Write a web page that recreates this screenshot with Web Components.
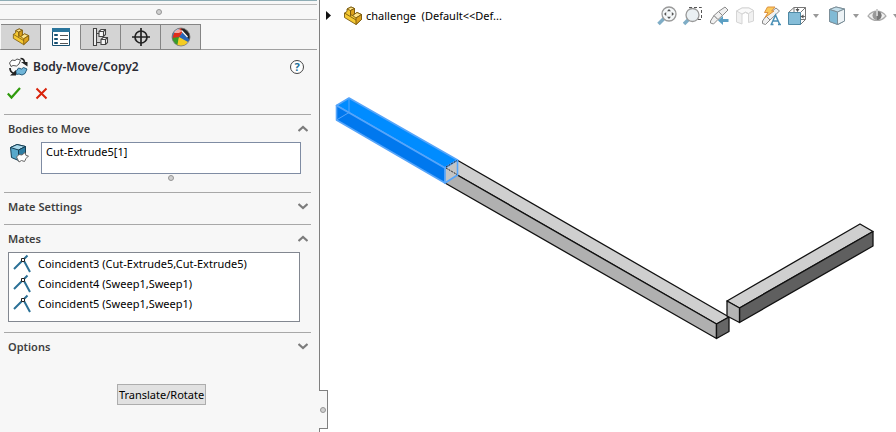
<!DOCTYPE html>
<html lang="en">
<head>
<meta charset="utf-8">
<title>challenge</title>
<style>
  html, body { height: 100%; }
  body { margin: 0; overflow: hidden; background: #fff; color: #000;
         font: 11px/16px "Noto Sans", "Open Sans", sans-serif; }
</style>
</head>
<body>
<cad-app>
  <property-panel slot="panel" name="Body-Move/Copy2">
    <panel-section name="Bodies to Move" open>
      <body-picker value="Cut-Extrude5[1]"></body-picker>
    </panel-section>
    <panel-section name="Mate Settings"></panel-section>
    <panel-section name="Mates" open>
      <mate-list>
        <mate-item>Coincident3 (Cut-Extrude5,Cut-Extrude5)</mate-item>
        <mate-item>Coincident4 (Sweep1,Sweep1)</mate-item>
        <mate-item>Coincident5 (Sweep1,Sweep1)</mate-item>
      </mate-list>
    </panel-section>
    <panel-section name="Options"></panel-section>
    <push-button slot="footer">Translate/Rotate</push-button>
  </property-panel>
  <view-bar slot="bar">challenge&nbsp; (Default&lt;&lt;Def...</view-bar>
  <model-view slot="model"></model-view>
</cad-app>

<script>
const base = `* { box-sizing: border-box; }
  button { margin: 0; padding: 0; border: 0; background: none; color: inherit; font: inherit; }
  svg { display: block; }`;

const icons = {
  part: `<g stroke="#7a5a10" stroke-width=".9" stroke-linejoin="round">
    <path fill="#f5c933" d="M1.500 7 4 5.500V3L8 1l3.500 1.500V8L14 6.500 18.500 8.500V13.500L13 18.500 1.500 11.500Z"/>
    <path fill="#ffe58c" d="M4 3 8 1l3.500 1.500L7.500 4.500Z"/>
    <path fill="#ffe58c" d="M9.500 9.500 14 6.500l4.500 2L13 12Z"/>
    <path fill="#dca11b" d="M13 12l5.500-3.500v5L13 18.500ZM7.500 4.500l4-2V8l-2 1.500-2-1Z"/>
    <path fill="none" d="M1.500 7 13 14M7.500 4.500V10"/></g>`,
  props: `<path fill="#fff" stroke="#174f70" d="M1.500 1.500h17v17h-17z"/>
    <path fill="#2a759c" d="M1 1h18v4H1z"/>
    <path fill="#5ba3c6" stroke="#174f70" d="M3.500 7.500h3v1h-3zM3.500 11.500h3v1h-3zM3.500 15.500h3v1h-3z"/>
    <path stroke="#555" d="M9 8.500h8M9 12.500h8M9 16.500h8"/>`,
  config: `<g fill="#f7f7f7" stroke="#444" stroke-width="1.1">
    <path d="M2.500 1.500h3v17h-3zM5.500 6.500h3M5.500 15.500h4"/>
    <path d="M8 4.500 10 2.500h4.500v5l-2 2H8zM10 12.500l2-2h4.500v5l-2 2H10z"/>
    <path fill="none" d="M8 4.500h4.500v5M12.500 4.500l2-2M10 12.500h4.500v5M14.500 12.500l2-2"/></g>`,
  target: `<g fill="none" stroke="#222" stroke-width="1.700"><circle cx="10" cy="10" r="6"/>
    <path d="M10 1v18M1 10h18"/></g>`,
  ball: `<clipPath id="c"><circle cx="10" cy="10" r="9"/></clipPath>
    <g clip-path="url(#c)"><path fill="#e02d1b" d="M0 0h14L8 11 0 12z"/><path fill="#2c8fd3" d="M0 0h6l3 2L4 11H0z"/>
    <path fill="#e02d1b" d="M6 3 12 1 9 11 1 12 3 6z"/>
    <path fill="#3a9b28" d="M0 11 8 10 7 20H0z"/><path fill="#f4cc22" d="M8 10 19 11 14 20H6z"/>
    <path fill="#2866b8" d="M8 10 12 5 20 12 17 15z"/><path fill="#252525" d="M10 0h10v14L11 5z"/>
    <ellipse cx="6" cy="4" rx="4" ry="2" fill="#fff" opacity=".6"/></g>
    <path fill="none" stroke="#fff" stroke-width="1.200" d="M10.500 3.500 16.500 10"/>
    <circle cx="10" cy="10" r="9" fill="none" stroke="#777" stroke-width=".8"/>`,
  move: `<g stroke="#444" stroke-width=".9" stroke-linejoin="round"><path fill="#fff" d="M1.500 6 4 3l3 .5 2-1.500 3.500 1L11 7 8.500 9 5 8.500 3 9.500z"/>
    <path fill="#70b5d8" stroke="#174f70" d="M8 14.500 10.500 11l3 1 2-1.500 3.500 1.500-2 4.500-3 1.500-3-1-2.500.5z"/></g>
    <path fill="none" stroke="#222" stroke-width="1.700" d="M12.500 1.500c3 0 4 1.500 4 4.500M2 11c0 3 1.500 4.500 3.500 5"/>
    <path fill="#222" d="M13 5h6.500v4.500zM2 18.500h6V13z"/>`,
  solid: `<g stroke="#153f55" stroke-linejoin="round"><path fill="#58a9cb" d="M1.500 4.500 8 1.500l8.500 2v9L9.500 17.500l-7-3z"/>
    <path fill="#a9d9ec" d="M1.500 4.500 8 1.500l8.500 2-7 3.500z"/><path fill="#2d7da3" d="M9.500 7l7-3.500v9L9.500 17.500z"/></g>
    <path fill="#fff" stroke="#666" stroke-linejoin="round" d="M7.500 14 10 11.500l3 .5 3-2.500 1 3 2.500.5-2.500 2.500-1.500 3-3-1-2.500 1.500z"/>`,
  mate: `<path fill="none" stroke="#2b7196" stroke-width="2" d="M1 15 14.500 1.500M10.500 6 17 18"/>
    <path fill="#fff" stroke="#222" d="M8.500 4.500h3v3h-3z"/>`,
  fit: `<path stroke="#7fadc6" stroke-width="3.500" d="M1.500 18l6-6"/><circle cx="12" cy="8" r="7" fill="#f5f8f9" stroke="#999" stroke-width="1.300"/>
    <path fill="#555" d="M12 3l2 2.200h-4zM12 13l2-2.200h-4zM7 8l2.200-2v4zM17 8l-2.200-2v4z"/>`,
  area: `<path fill="none" stroke="#555" stroke-dasharray="3 2" d="M6 1.500h12.500v12h-5"/>
    <path stroke="#7fadc6" stroke-width="3.500" d="M1 18l5-5"/><circle cx="9.500" cy="9" r="6.500" fill="#eaf0f3" stroke="#999" stroke-width="1.300"/>`,
  previous: `<g fill="#f0f0f0" stroke="#8a8a8a" stroke-linejoin="round">
    <path d="M1.500 15 5 9.500l4 4-4.500 4.500-3-1z"/><path d="M5 9.500 9.500 5.500l4 4L9 13.500z"/>
    <path d="M9.500 5.500 16 1l3 3-5.500 5.500z"/></g><path fill="#5b9fc3" d="M9 14.500l5-4.500v3h5.500v3H14v3z"/>`,
  section: `<g fill="#f1f1f1" stroke="#d5d5d5" stroke-linejoin="round"><path d="M1.500 5 7 2h7l4.500 2.500V15l-5 1.500V8l-3-1.500L7 8v10l-5.500-2z"/>
    <path fill="#fafafa" d="M1.500 5 7 2h7l4.500 2.500-5 3-3-1.500L7 8z"/></g>`,
  annotate: `<g fill="#f0f0f0" stroke="#8a8a8a" stroke-linejoin="round"><path d="M1.500 15 5 10l4 4-4.500 4.500-3-1zM5 10l10-8 3.500 3L9 14z"/></g>
    <path fill="#fbc95c" stroke="#dd9240" d="M6.500 1h7.500l-3.500 4h2.500L4 11.500l3-5H3.500z"/>
    <path fill="none" stroke="#4a8fb5" stroke-width="1.500" d="M10.500 18 14.500 9 18.500 18M12 15h5M9.500 18.500h3M17 18.500h3"/>`,
  cube: `<g fill="none" stroke="#777"><path fill="#fff" d="M1.500 6.500 7 1.500h11.500v12l-5 5z"/>
    <path d="M7 1.500v12h11.500M13.500 6.500l5-5M10.500 1.500v3M14 10.500h4"/></g>
    <path fill="#85bdd8" stroke="#4f89a5" d="M1.500 6.500h12v12h-12z"/><path fill="#555" d="M8.500 3h4l-2 3zM13.500 10.500l3-2v4z"/>`,
  style: `<g stroke="#7c8f99" stroke-linejoin="round"><path fill="#f5f7f8" d="M2.500 3.500 9 1l8.500 2V15L11 18.500l-8.500-3z"/>
    <path fill="#c3dfeb" d="M2.500 3.500 9 1l8.500 2-7 3z"/><path fill="#80bad5" d="M2.500 3.500l8 2.500v12.500l-8-3z"/>
    <path fill="#edf3f6" d="M10.500 6l7-3V15l-7 3.500z"/></g>`,
  eye: `<path fill="#f0f0f0" stroke="#aaa" stroke-width="1.200" d="M1 10c5-6.500 13-6.500 18 0-5 6-13 6-18 0z"/>
    <circle cx="10" cy="9.500" r="4.500" fill="#999"/><path fill="#777" d="M10 5v9a4.500 4.500 0 0 0 0-9z"/>
    <path fill="#ccc" d="M9 3h2v7H9z"/>`
};
const icon = (name, size = 20) =>
  `<svg width="${size}" height="${size}" viewBox="0 0 20 20" fill="none" aria-hidden="true">${icons[name]}</svg>`;

function define(name, render, setup) {
  customElements.define(name, class extends HTMLElement {
    connectedCallback() {
      if (this.shadowRoot) return;
      const shadow = this.attachShadow({mode: 'open'});
      shadow.innerHTML = render(this);
      if (setup) setup(this, shadow);
    }
  });
}

define('cad-app', () => `<style>${base}
  :host { display: flex; height: 100%; }
  main { flex: 1; min-width: 0; display: flex; flex-direction: column; }
  </style>
  <slot name="panel"></slot>
  <main><slot name="bar"></slot><slot name="model"></slot></main>`);

// small round grip of a splitter
define('drag-dot', () => `<style>
  :host { display: block; width: 6px; height: 6px; border: 1px solid #959595;
          border-radius: 50%; background: #d0d0d0; box-sizing: border-box; }
  </style>`);

define('panel-tabs', () => `<style>${base}
  :host { display: flex; padding-left: 1px; height: 26px; margin-right: 2px;
          box-shadow: inset 0 -1px #a0a0a0; }
  button { width: 40px; height: 26px; display: grid; place-items: center;
           background: #d4d4d4; border: 1px solid #858585; border-left: 0; }
  .on { background: #f7f7f7; border-bottom-color: #f7f7f7; border-top-color: #c8c8c8; }
  </style>
  <button aria-label="Feature tree">${icon('part', 18)}</button>
  <button class="on" aria-label="Properties">${icon('props')}</button>
  <button aria-label="Configurations">${icon('config')}</button>
  <button aria-label="Dimensions">${icon('target')}</button>
  <button aria-label="Appearances">${icon('ball')}</button>`);

define('property-panel', el => `<style>${base}
  :host { display: flex; flex-direction: column; position: relative; flex: 0 0 320px;
          background: #f7f7f7; border-right: 1px solid #808080; box-sizing: border-box; }
  .top { height: 5px; margin-right: 2px; border-top: 1px solid #8fadb5; border-bottom: 1px solid #b9b9b9; }
  .grip { display: grid; place-items: center; height: 15px; margin: 0 2px 4px 0; border-bottom: 1px solid #b9b9b9; }
  header { display: flex; align-items: center; gap: 5px; height: 33px; padding: 0 15px 0 8px; }
  h1 { flex: 1; margin: 0; font-size: 12px; line-height: 20px; font-weight: 600; color: #2b2b33; }
  .actions { display: flex; gap: 14px; height: 31px; padding: 3px 7px 0; }
  .actions button { height: 14px; }
  footer { display: flex; justify-content: center; padding: 20px 0 0 4px; }
  .split { position: absolute; right: -9px; bottom: 3px; width: 9px; height: 39px; display: grid; place-items: center;
           background: #f7f7f7; border: 1px solid #808080; border-left: 0; }
  </style>
  <div class="top"></div>
  <div class="grip"><drag-dot></drag-dot></div>
  <panel-tabs></panel-tabs>
  <header>${icon('move')}<h1>${el.getAttribute('name')}</h1>
    <help-button></help-button></header>
  <div class="actions">
    <button aria-label="OK"><svg width="14" height="14" viewBox="0 0 14 14"><path fill="none" stroke="#2f9a0c" stroke-width="2.200" d="M.8 7.500 4.500 11.500 13 2"/></svg></button>
    <button aria-label="Cancel"><svg width="14" height="14" viewBox="0 0 14 14"><path fill="none" stroke="#d9230b" stroke-width="2" d="M1.500 2.500l10 10M11.500 2.500l-10 10"/></svg></button>
  </div>
  <slot></slot>
  <footer><slot name="footer"></slot></footer>
  <div class="split"><drag-dot></drag-dot></div>`);

define('help-button', () => `<style>${base}
  :host { display: block; }
  button { display: block; width: 14px; height: 14px; border-radius: 50%; border: 1px solid #444;
           background: #fff; color: #217099; font-size: 11px; line-height: 12px; font-weight: 700; }
  </style><button>?</button>`);

define('panel-section', el => `<style>${base}
  :host { display: block; margin: 0 8px 0 4px; border-top: 1px solid #a8a8a8; padding-bottom: 4px; }
  :host([open]) { padding-bottom: 10px; }
  h2 { margin: 0; font-size: 11px; font-weight: 600; color: #3f3f3f; }
  button { display: flex; width: 100%; height: 27px; align-items: center; justify-content: space-between; padding: 0 3px 0 4px; }
  :host([open]) svg { transform: rotate(180deg); }
  .body { display: none; }
  :host([open]) .body { display: block; }
  </style>
  <h2><button aria-expanded="${el.hasAttribute('open')}">${el.getAttribute('name')}
    <svg width="10" height="7" viewBox="0 0 10 7"><path fill="none" stroke="#7c7c7c" stroke-width="2.200" d="M.5 1 5 5 9.500 1"/></svg></button></h2>
  <div class="body"><slot></slot></div>`,
  (el, shadow) => {
    const button = shadow.querySelector('button');
    button.addEventListener('click', () => {
      button.setAttribute('aria-expanded', el.toggleAttribute('open'));
    });
  });

define('body-picker', el => `<style>${base}
  :host { display: grid; grid-template-columns: 20px 1fr; column-gap: 12px; padding: 0 10px 0 5px; }
  label { padding-top: 1px; }
  textarea { display: block; width: 100%; height: 32px; margin: 0; padding: 1px 4px; resize: none; overflow: hidden;
             border: 1px solid #7f8ca3; background: #fff; color: #000; font: inherit; }
  drag-dot { grid-column: 2; justify-self: center; margin: 1px 0; }
  </style>
  <label for="bodies" aria-label="Bodies to move">${icon('solid')}</label>
  <textarea id="bodies" readonly>${el.getAttribute('value')}</textarea>
  <drag-dot></drag-dot>`);

define('mate-list', () => `<style>
  :host { display: block; min-height: 70px; margin: 0 11px 0 4px; padding-top: 1px; box-sizing: border-box;
          border: 1px solid #828790; background: #fff; }
  </style><slot></slot>`);

define('mate-item', () => `<style>${base}
  :host { display: flex; align-items: center; gap: 5px; height: 20px; padding-left: 4px; }
  </style>${icon('mate')}<span><slot></slot></span>`);

define('push-button', () => `<style>${base}
  :host { display: block; }
  button { height: 21px; padding: 0 1px; border: 1px solid #adadad; background: #e1e1e1; }
  </style><button><slot></slot></button>`);

define('tool-button', el => `<style>${base}
  :host { display: block; flex: none; }
  button { display: flex; align-items: center; gap: 6px; }
  </style>
  <button aria-label="${el.getAttribute('icon')}">${icon(el.getAttribute('icon'))}
  ${el.hasAttribute('menu') ? '<svg width="6" height="4" viewBox="0 0 6 4"><path fill="#999" d="M0 0h6L3 4z"/></svg>' : ''}</button>`);

define('view-bar', () => `<style>${base}
  :host { display: flex; align-items: center; height: 31px; flex: none; overflow: hidden; }
  .tree { display: flex; align-items: center; padding-left: 6px; white-space: nowrap; }
  .tree svg { margin-right: 12px; }
  .tree svg + svg { margin-right: 3px; }
  .tools { display: flex; gap: 6px; margin: 0 -3px 0 auto; }
  .tools [menu] + [menu] { margin-left: 2px; }
  </style>
  <button class="tree"><svg width="5" height="10" viewBox="0 0 5 10"><path fill="#111" d="M0 0 5 4.500 0 9z"/></svg>${icon('part')}<slot></slot></button>
  <div class="tools">
    <tool-button icon="fit"></tool-button>
    <tool-button icon="area"></tool-button>
    <tool-button icon="previous"></tool-button>
    <tool-button icon="section"></tool-button>
    <tool-button icon="annotate"></tool-button>
    <tool-button icon="cube" menu></tool-button>
    <tool-button icon="style" menu></tool-button>
    <tool-button icon="eye" menu></tool-button>
  </div>`);

define('model-view', () => `<style>
  :host { display: block; flex: 1; min-height: 0; }
  svg { display: block; width: 100%; height: 100%; }
  .solid { stroke: #111; stroke-width: 1.3; stroke-linejoin: round; }
  .picked { stroke: #56a5fa; stroke-width: 1.6; stroke-linejoin: round; }
  </style>
  <svg viewBox="320 31 576 401" role="img" aria-label="Model">
    <g class="solid">
      <path fill="#cfcfcf" d="M457 160 729 317 716.500 324 445 168z"/>
      <path fill="#b0b0b0" d="M445 168 716.500 324V338.500L445 183z"/>
      <path fill="#666" d="M716.500 324 729 317V331.500L716.500 338.500z"/>
      <path fill="#cfcfcf" d="M727 301 860 224 873 231.500 739.500 308z"/>
      <path fill="#5f5f5f" d="M739.500 308 873 231.500V246L739.500 322.500z"/>
      <path fill="#b4b4b4" d="M727 301 739.500 308V322.500L727 316z"/>
    </g>
    <g class="picked">
      <path fill="#008cff" d="M336.500 105.500 349 98 457.500 160 445 168z"/>
      <path fill="#0078ee" d="M336.500 105.500 445 168V183L336.500 120z"/>
      <path fill="#c4c4c4" d="M445 168 457.500 160V175L445 183z"/>
      <path fill="none" stroke-width="1" d="M349 98V112.500L336.500 120"/>
    </g>
    <path stroke="#222" stroke-dasharray="2 1" d="M446 168 457 174.500"/>
    <path stroke="#222" stroke-dasharray="2 1" d="M446 167 457 160.500"/>
  </svg>`);
</script>
</body>
</html>
